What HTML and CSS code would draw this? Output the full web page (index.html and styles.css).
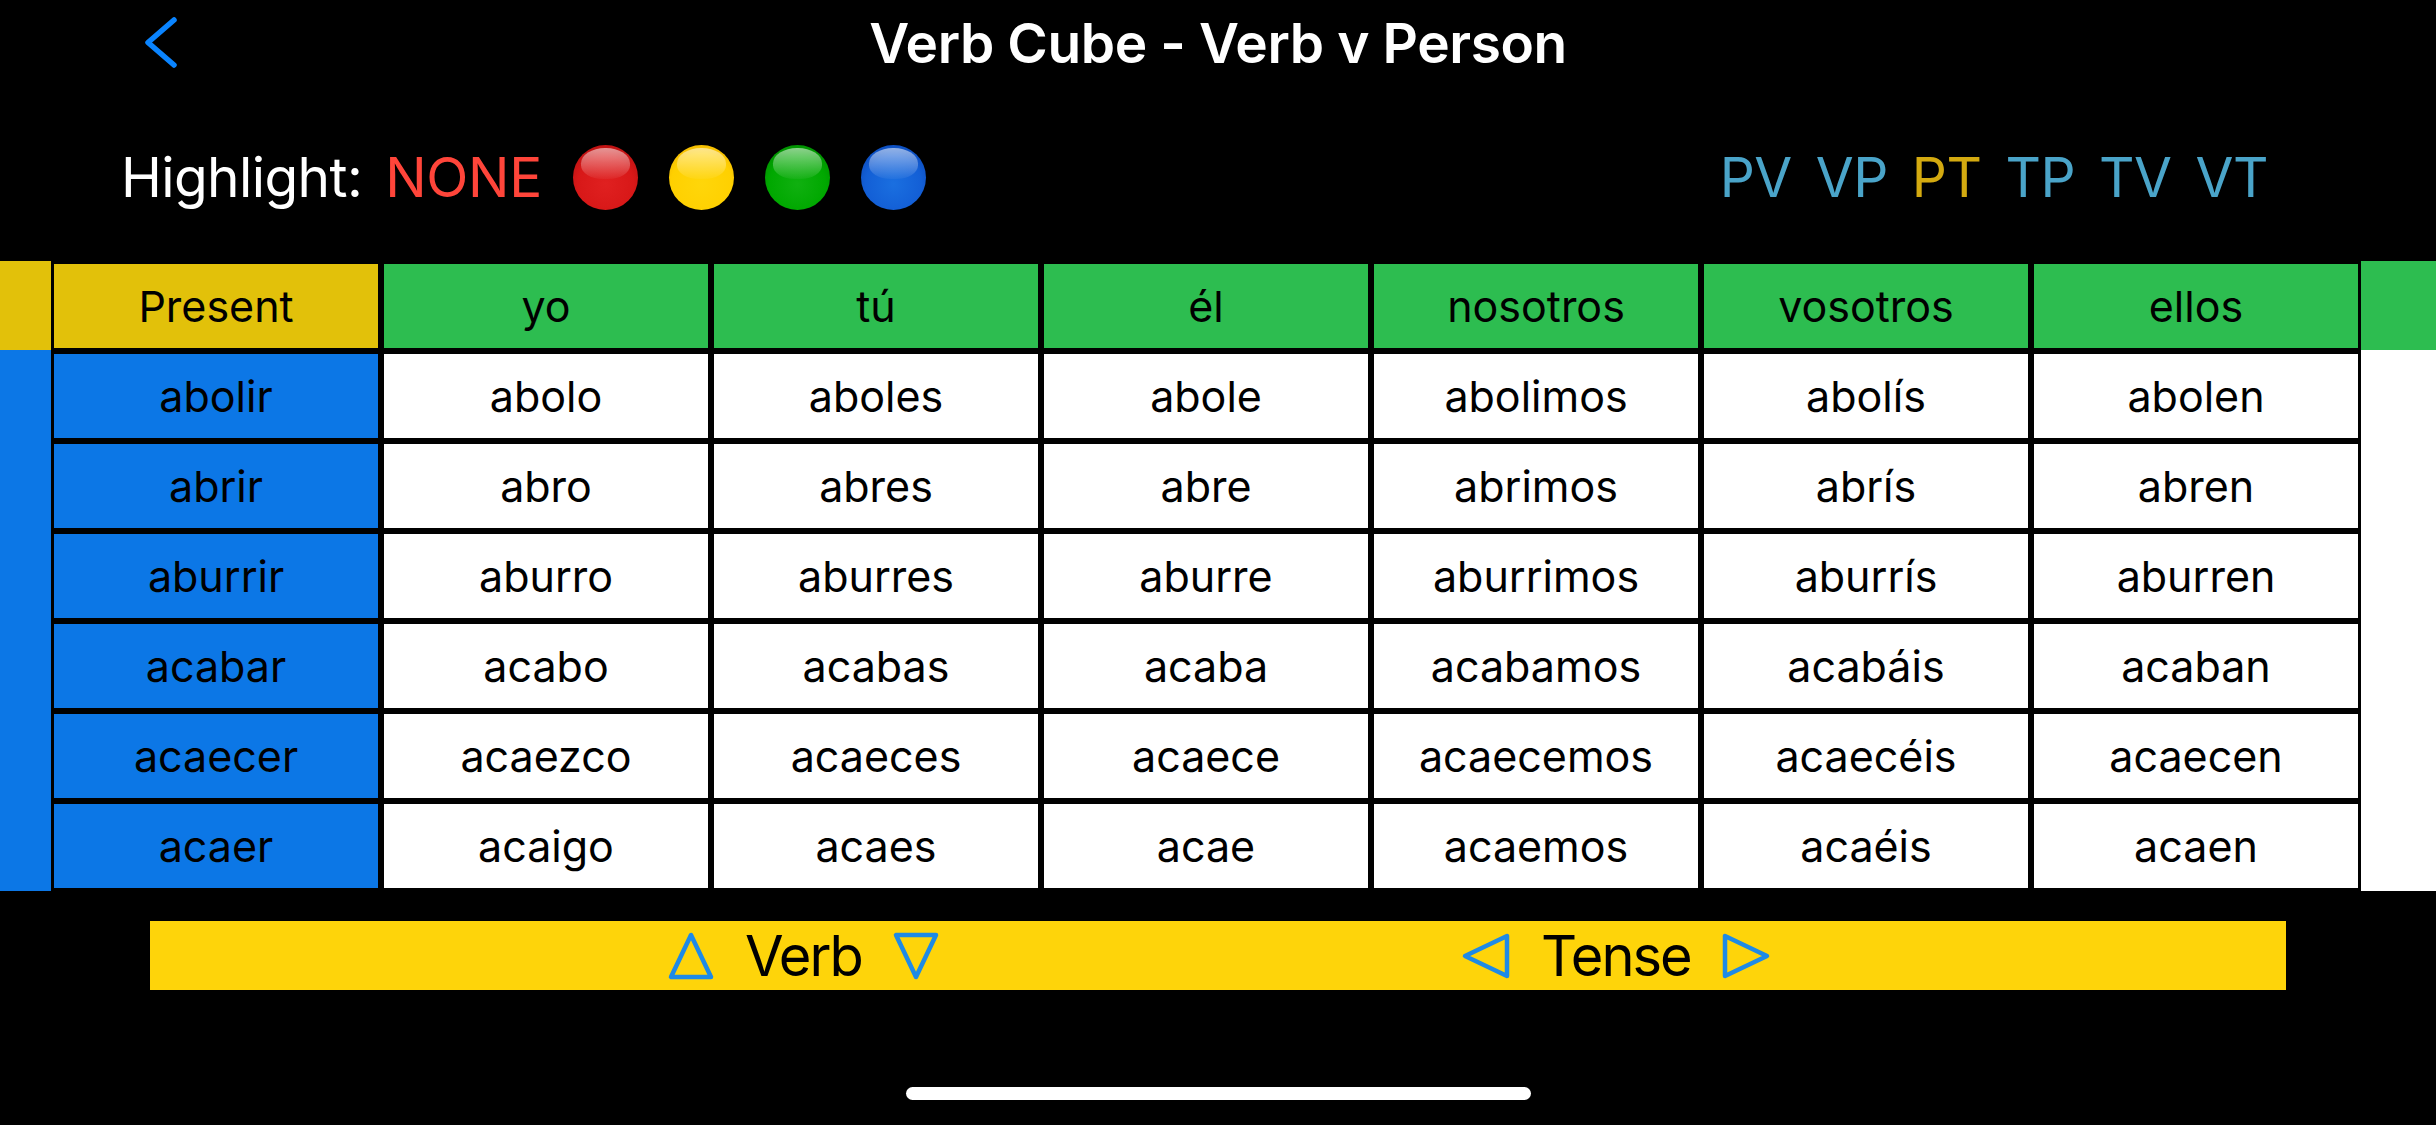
FILE: index.html
```html
<!DOCTYPE html>
<html lang="es">
<head>
<meta charset="utf-8">
<title>Verb Cube - Verb v Person</title>
<link rel="stylesheet" href="styles.css">
</head>
<body>
<div class="screen">
  <header class="nav">
    <div class="nav-left">
      <svg class="back" width="38" height="58" viewBox="0 0 38 58" aria-label="Back">
        <path d="M32 6 L6 28.5 L32 51" fill="none" stroke="#0a84ff" stroke-width="5.5" stroke-linecap="round" stroke-linejoin="round"/>
      </svg>
    </div>
    <h1 class="title">Verb Cube - Verb v Person</h1>
    <div class="nav-right"></div>
  </header>

  <section class="highlight-row">
    <div class="highlight">
      <span class="hl-label">Highlight:</span>
      <span class="hl-none">NONE</span>
      <span class="ball ball-red"></span>
      <span class="ball ball-yellow"></span>
      <span class="ball ball-green"></span>
      <span class="ball ball-blue"></span>
    </div>
    <div class="modes">
      <span class="mode">PV</span>
      <span class="mode">VP</span>
      <span class="mode mode-active">PT</span>
      <span class="mode">TP</span>
      <span class="mode">TV</span>
      <span class="mode">VT</span>
    </div>
  </section>

  <section class="board">
    <div class="strip strip-left">
      <div class="strip-head"></div>
      <div class="strip-body"></div>
    </div>
    <div class="grid">
      <div class="cell cell-tense">Present</div>
      <div class="cell cell-head">yo</div>
      <div class="cell cell-head">tú</div>
      <div class="cell cell-head">él</div>
      <div class="cell cell-head">nosotros</div>
      <div class="cell cell-head">vosotros</div>
      <div class="cell cell-head">ellos</div>

      <div class="cell cell-verb">abolir</div>
      <div class="cell">abolo</div>
      <div class="cell">aboles</div>
      <div class="cell">abole</div>
      <div class="cell">abolimos</div>
      <div class="cell">abolís</div>
      <div class="cell">abolen</div>

      <div class="cell cell-verb">abrir</div>
      <div class="cell">abro</div>
      <div class="cell">abres</div>
      <div class="cell">abre</div>
      <div class="cell">abrimos</div>
      <div class="cell">abrís</div>
      <div class="cell">abren</div>

      <div class="cell cell-verb">aburrir</div>
      <div class="cell">aburro</div>
      <div class="cell">aburres</div>
      <div class="cell">aburre</div>
      <div class="cell">aburrimos</div>
      <div class="cell">aburrís</div>
      <div class="cell">aburren</div>

      <div class="cell cell-verb">acabar</div>
      <div class="cell">acabo</div>
      <div class="cell">acabas</div>
      <div class="cell">acaba</div>
      <div class="cell">acabamos</div>
      <div class="cell">acabáis</div>
      <div class="cell">acaban</div>

      <div class="cell cell-verb">acaecer</div>
      <div class="cell">acaezco</div>
      <div class="cell">acaeces</div>
      <div class="cell">acaece</div>
      <div class="cell">acaecemos</div>
      <div class="cell">acaecéis</div>
      <div class="cell">acaecen</div>

      <div class="cell cell-verb">acaer</div>
      <div class="cell">acaigo</div>
      <div class="cell">acaes</div>
      <div class="cell">acae</div>
      <div class="cell">acaemos</div>
      <div class="cell">acaéis</div>
      <div class="cell">acaen</div>
    </div>
    <div class="strip strip-right">
      <div class="strip-head"></div>
      <div class="strip-body"></div>
    </div>
  </section>

  <section class="control-bar">
    <div class="ctrl ctrl-verb">
      <svg class="tri" width="46" height="48" viewBox="0 0 46 48"><polygon points="23,3 3,45 43,45" /></svg>
      <span class="ctrl-label">Verb</span>
      <svg class="tri" width="46" height="48" viewBox="0 0 46 48"><polygon points="3,3 43,3 23,45" /></svg>
    </div>
    <div class="ctrl ctrl-tense">
      <svg class="tri" width="48" height="46" viewBox="0 0 48 46"><polygon points="45,3 45,43 3,23" /></svg>
      <span class="ctrl-label">Tense</span>
      <svg class="tri" width="48" height="46" viewBox="0 0 48 46"><polygon points="3,3 3,43 45,23" /></svg>
    </div>
  </section>

  <div class="home-indicator"></div>
</div>
</body>
</html>
```
FILE: styles.css
```css
html, body {
  margin: 0;
  padding: 0;
  background: #000;
}

body {
  font-family: "Inter", "Liberation Sans", sans-serif;
  color: #fff;
  width: 2436px;
  height: 1125px;
  overflow: hidden;
}

.screen {
  display: flex;
  flex-direction: column;
  width: 2436px;
}

/* ---------- nav ---------- */
.nav {
  display: grid;
  grid-template-columns: 1fr auto 1fr;
  align-items: center;
  height: 86px;
}

.nav-left {
  display: flex;
  align-items: center;
  padding-left: 142px;
}

.back {
  display: block;
}

.title {
  margin: 0;
  font-size: 55px;
  line-height: 1;
  font-weight: 600;
  color: #fff;
  letter-spacing: -0.4px;
}

/* ---------- highlight row ---------- */
.highlight-row {
  display: flex;
  align-items: center;
  justify-content: space-between;
  height: 65px;
  margin-top: 59px;
  padding-left: 121px;
  padding-right: 168px;
}

.highlight {
  display: flex;
  align-items: center;
  gap: 31px;
}

.hl-label,
.hl-none,
.mode {
  font-size: 55px;
  line-height: 1;
  font-weight: 400;
}

.hl-label {
  color: #fff;
  letter-spacing: -0.6px;
}

.hl-none {
  color: #ff453a;
  letter-spacing: -0.3px;
  margin-left: -8px;
}

.ball {
  position: relative;
  display: block;
  width: 65px;
  height: 65px;
  border-radius: 50%;
  box-sizing: border-box;
}

.ball::after {
  content: "";
  position: absolute;
  left: 13%;
  right: 13%;
  top: 5%;
  height: 47%;
  border-radius: 50% 50% 45% 45%;
  background: linear-gradient(to bottom, rgba(255, 255, 255, 0.55), rgba(255, 255, 255, 0.04));
}

.ball-red {
  background: radial-gradient(circle at 50% 60%, #e02020 0%, #d81818 55%, #b51010 85%, #8e0c0c 100%);
}

.ball-yellow {
  background: radial-gradient(circle at 50% 60%, #ffd60a 0%, #ffd000 60%, #f0b400 85%, #d09000 100%);
}

.ball-green {
  background: radial-gradient(circle at 50% 60%, #10b010 0%, #00a800 55%, #008a00 85%, #006400 100%);
}

.ball-blue {
  background: radial-gradient(circle at 50% 60%, #1a6fe0 0%, #135fd6 55%, #0a48b8 85%, #073a96 100%);
}

.modes {
  display: flex;
  align-items: center;
  gap: 24px;
}

.mode {
  color: #4aa4c9;
  letter-spacing: -0.5px;
}

.mode-active {
  color: #d4aa10;
}

/* ---------- board ---------- */
.board {
  display: flex;
  margin-top: 51px;
  height: 630px;
}

.strip {
  display: flex;
  flex-direction: column;
}

.strip-left {
  width: 51px;
}

.strip-right {
  flex: 1;
}

.strip-head {
  height: 89px;
}

.strip-body {
  flex: 1;
}

.strip-left .strip-head {
  background: #e2c10a;
}

.strip-left .strip-body {
  background: #0c77e6;
}

.strip-right .strip-head {
  background: #2dbd50;
}

.strip-right .strip-body {
  background: #fff;
}

.grid {
  flex: none;
  width: 2310px;
  box-sizing: border-box;
  padding: 3px;
  background: #000;
  display: grid;
  grid-template-columns: repeat(7, 1fr);
  grid-template-rows: repeat(7, 84px);
  gap: 6px;
}

.cell {
  display: flex;
  align-items: center;
  justify-content: center;
  background: #fff;
  color: #000;
  font-size: 43px;
  line-height: 1;
  letter-spacing: 0;
}

.cell-tense {
  background: #e2c10a;
}

.cell-head {
  background: #2dbd50;
}

.cell-verb {
  background: #0c77e6;
}

/* ---------- control bar ---------- */
.control-bar {
  display: grid;
  grid-template-columns: 1312px 1fr;
  align-items: center;
  height: 69px;
  margin: 30px 150px 0 150px;
  background: #fed40a;
}

.ctrl {
  display: flex;
  align-items: center;
  gap: 31px;
}

.ctrl-verb {
  padding-left: 518px;
}

.ctrl-label {
  color: #000;
  font-size: 56px;
  line-height: 1;
  letter-spacing: -2px;
}

.tri {
  display: block;
}

.tri polygon {
  fill: none;
  stroke: #1e8ae6;
  stroke-width: 4.5;
  stroke-linejoin: round;
}

/* ---------- home indicator ---------- */
.home-indicator {
  width: 625px;
  height: 13px;
  margin: 97px auto 0;
  border-radius: 7px;
  background: #fff;
}
```
